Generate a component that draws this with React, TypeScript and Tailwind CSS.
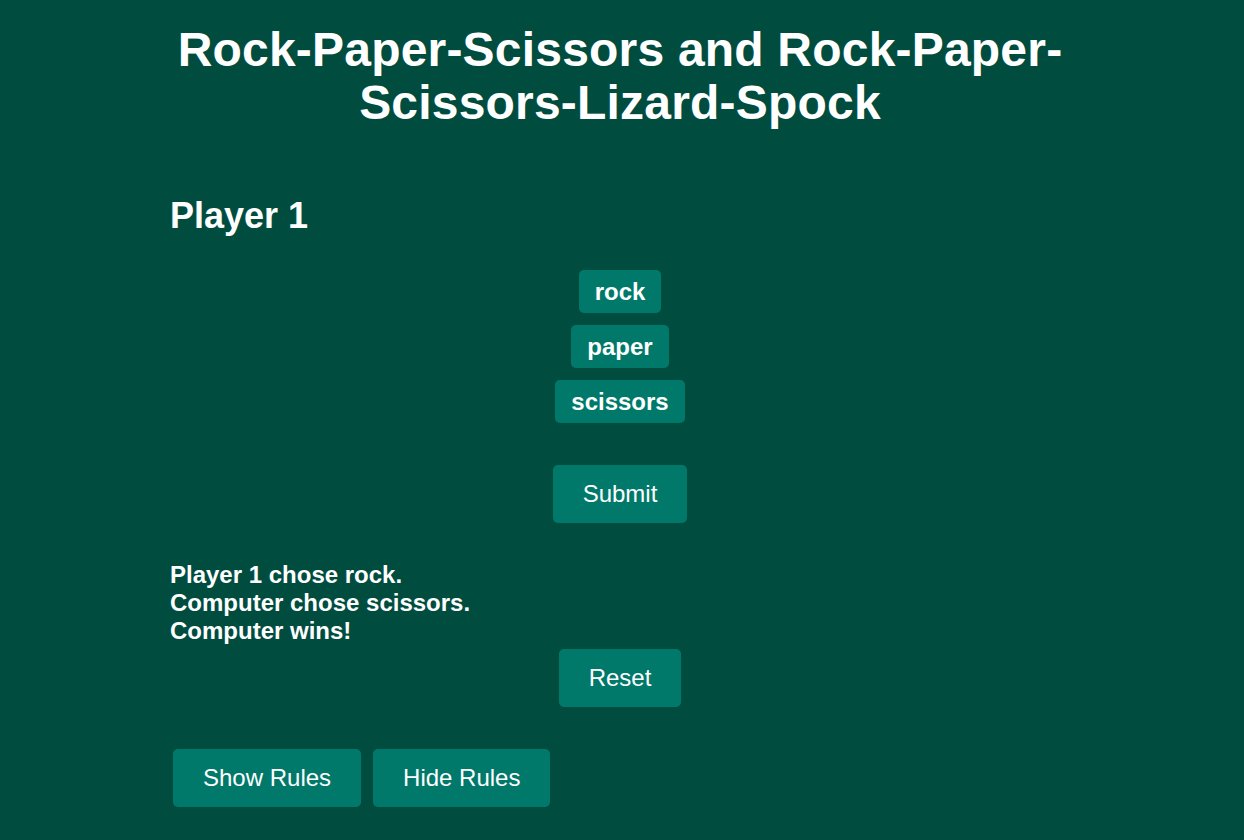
import React from "react";

const choices = ["rock", "paper", "scissors"];

export default function App() {
  return (
    <div className="min-h-screen bg-[#004d40] text-white font-['Liberation_Sans',Arial,sans-serif]">
      <div className="w-[900px] ml-[170px] pt-[23px]">
        <h1 className="text-center text-[48px] leading-[53px] font-bold tracking-[0.2px]">
          Rock-Paper-Scissors and Rock-Paper-
          <br />
          Scissors-Lizard-Spock
        </h1>

        <h2 className="mt-[67px] text-[36px] leading-[40px] font-bold">Player 1</h2>

        <div className="mt-[34px] flex flex-col items-center gap-[12px]">
          {choices.map((c) => (
            <button
              key={c}
              className="bg-[#00796b] rounded-[5px] px-4 py-2 text-[24px] leading-[27px] font-bold"
            >
              {c}
            </button>
          ))}
        </div>

        <div className="mt-[42px] flex justify-center">
          <button className="bg-[#00796b] rounded-[5px] px-[30px] py-[15px] text-[24px] leading-[28px]">
            Submit
          </button>
        </div>

        <div className="mt-[38px] text-[24px] leading-[28px] font-bold">
          <p>Player 1 chose rock.</p>
          <p>Computer chose scissors.</p>
          <p>Computer wins!</p>
        </div>

        <div className="mt-[4px] flex justify-center">
          <button className="bg-[#00796b] rounded-[5px] px-[30px] py-[15px] text-[24px] leading-[28px]">
            Reset
          </button>
        </div>

        <div className="mt-[42px] flex gap-[12px] pl-[3px]">
          <button className="bg-[#00796b] rounded-[5px] px-[30px] py-[15px] text-[24px] leading-[28px]">
            Show Rules
          </button>
          <button className="bg-[#00796b] rounded-[5px] px-[30px] py-[15px] text-[24px] leading-[28px]">
            Hide Rules
          </button>
        </div>
      </div>
    </div>
  );
}
